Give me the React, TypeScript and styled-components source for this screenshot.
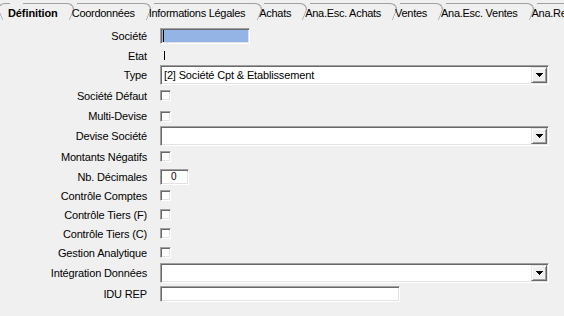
import React from "react";
import styled, { createGlobalStyle, css } from "styled-components";

const GlobalStyle = createGlobalStyle`
  html, body { margin: 0; padding: 0; background: #f0f0f0; }
  body {
    font-family: "Liberation Sans", Arial, sans-serif;
    font-size: 11px;
    color: #000;
  }
  * { box-sizing: border-box; }
`;

const sunken = css`
  border: 1px solid;
  border-color: #a0a0a0 #ffffff #ffffff #a0a0a0;
  box-shadow: inset 1px 1px 0 #696969, inset -1px -1px 0 #e3e3e3;
`;

const raised = css`
  border: 1px solid;
  border-color: #e3e3e3 #696969 #696969 #e3e3e3;
  box-shadow: inset 1px 1px 0 #ffffff, inset -1px -1px 0 #a0a0a0;
`;

const Page = styled.div`
  width: 564px;
  height: 316px;
  overflow: hidden;
  background: #f0f0f0;
`;

const TabStrip = styled.div`
  display: flex;
  height: 22px;
  overflow: hidden;
  white-space: nowrap;
`;

const Tab = styled.div<{ $active?: boolean; $first?: boolean }>`
  position: relative;
  flex: none;
  height: 22px;
  padding: 3px 12px 0 ${(p) => (p.$first ? 8 : 2)}px;
  line-height: 20px;
  letter-spacing: ${(p) => (p.$active ? "-0.1px" : "-0.28px")};
  font-weight: ${(p) => (p.$active ? 700 : 400)};

  &::before {
    content: "";
    position: absolute;
    left: ${(p) => (p.$first ? 16 : 0)}px;
    right: 0;
    top: 3px;
    bottom: 2px;
    border-top: 1px solid #a0a0a0;
    border-right: 1px solid #a0a0a0;
    border-top-right-radius: 10px 9px;
    transform: skewX(-22deg);
    transform-origin: center bottom;
    pointer-events: none;
  }

  ${(p) =>
    p.$first &&
    css`
      &::after {
        content: "";
        position: absolute;
        left: 2px;
        width: 14px;
        top: 3px;
        bottom: 2px;
        border-top: 1px solid #a0a0a0;
        border-left: 1px solid #a0a0a0;
        border-top-left-radius: 10px 9px;
        transform: skewX(22deg);
        transform-origin: center bottom;
        pointer-events: none;
      }
    `}
`;

const Form = styled.div`
  display: flex;
  flex-direction: column;
  padding-top: 4px;
`;

const Row = styled.div<{ $h: number }>`
  display: grid;
  grid-template-columns: 147px 1fr;
  column-gap: 13px;
  align-items: center;
  height: ${(p) => p.$h}px;
`;

const Label = styled.div`
  text-align: right;
  white-space: nowrap;
  letter-spacing: -0.15px;
`;

const Cell = styled.div`
  display: flex;
  align-items: center;
`;

const HighlightField = styled.div`
  ${sunken};
  width: 90px;
  height: 16px;
  background: #93b4e5;
  padding-left: 1px;
  display: flex;
  align-items: center;
`;

const TextCaret = styled.span<{ $h: number }>`
  display: block;
  width: 1px;
  height: ${(p) => p.$h}px;
  background: #000;
  margin-left: 1px;
`;

const EtatValue = styled.div`
  padding-left: 3px;
  display: flex;
  align-items: center;
`;

const Select = styled.div`
  ${sunken};
  width: 389px;
  height: 20px;
  background: #fff;
  padding: 1px;
  display: flex;
  align-items: stretch;
`;

const SelectValue = styled.div`
  flex: 1;
  padding-left: 2px;
  line-height: 16px;
  white-space: nowrap;
  overflow: hidden;
  letter-spacing: -0.15px;
`;

const DropButton = styled.div`
  ${raised};
  width: 16px;
  height: 16px;
  background: #f0f0f0;
  display: flex;
  align-items: center;
  justify-content: center;
`;

const Checkbox = styled.div`
  ${sunken};
  width: 11px;
  height: 11px;
  background: #fff;
`;

const TextField = styled.div<{ $w: number }>`
  ${sunken};
  width: ${(p) => p.$w}px;
  height: 16px;
  background: #fff;
  padding-left: 10px;
  line-height: 14px;
  font-size: 10px;
`;

const Arrow = () => (
  <svg width="7" height="4" viewBox="0 0 7 4">
    <path d="M0 0h7v1H0zM1 1h5v1H1zM2 2h3v1H2zM3 3h1v1H3z" fill="#000" />
  </svg>
);

const DropDown = ({ value }: { value?: string }) => (
  <Select>
    <SelectValue>{value}</SelectValue>
    <DropButton>
      <Arrow />
    </DropButton>
  </Select>
);

const tabs = [
  "Définition",
  "Coordonnées",
  "Informations Légales",
  "Achats",
  "Ana.Esc. Achats",
  "Ventes",
  "Ana.Esc. Ventes",
  "Ana.Rep. Ventes",
];

export default function App() {
  return (
    <>
      <GlobalStyle />
      <Page>
        <TabStrip>
          {tabs.map((t, i) => (
            <Tab key={t} $active={i === 0} $first={i === 0}>
              {t}
            </Tab>
          ))}
        </TabStrip>
        <Form>
          <Row $h={20}>
            <Label>Société</Label>
            <Cell>
              <HighlightField>
                <TextCaret $h={12} />
              </HighlightField>
            </Cell>
          </Row>
          <Row $h={19}>
            <Label>Etat</Label>
            <EtatValue>
              <TextCaret $h={9} />
            </EtatValue>
          </Row>
          <Row $h={20}>
            <Label>Type</Label>
            <Cell>
              <DropDown value="[2] Société Cpt & Etablissement" />
            </Cell>
          </Row>
          <Row $h={21}>
            <Label>Société Défaut</Label>
            <Cell>
              <Checkbox />
            </Cell>
          </Row>
          <Row $h={20}>
            <Label>Multi-Devise</Label>
            <Cell>
              <Checkbox />
            </Cell>
          </Row>
          <Row $h={20}>
            <Label>Devise Société</Label>
            <Cell>
              <DropDown />
            </Cell>
          </Row>
          <Row $h={21}>
            <Label>Montants Négatifs</Label>
            <Cell>
              <Checkbox />
            </Cell>
          </Row>
          <Row $h={19}>
            <Label>Nb. Décimales</Label>
            <Cell>
              <TextField $w={29}>0</TextField>
            </Cell>
          </Row>
          <Row $h={19}>
            <Label>Contrôle Comptes</Label>
            <Cell>
              <Checkbox />
            </Cell>
          </Row>
          <Row $h={19}>
            <Label>Contrôle Tiers (F)</Label>
            <Cell>
              <Checkbox />
            </Cell>
          </Row>
          <Row $h={19}>
            <Label>Contrôle Tiers (C)</Label>
            <Cell>
              <Checkbox />
            </Cell>
          </Row>
          <Row $h={19}>
            <Label>Gestion Analytique</Label>
            <Cell>
              <Checkbox />
            </Cell>
          </Row>
          <Row $h={21}>
            <Label>Intégration Données</Label>
            <Cell>
              <DropDown />
            </Cell>
          </Row>
          <Row $h={22}>
            <Label>IDU REP</Label>
            <Cell>
              <TextField $w={240} />
            </Cell>
          </Row>
        </Form>
      </Page>
    </>
  );
}
